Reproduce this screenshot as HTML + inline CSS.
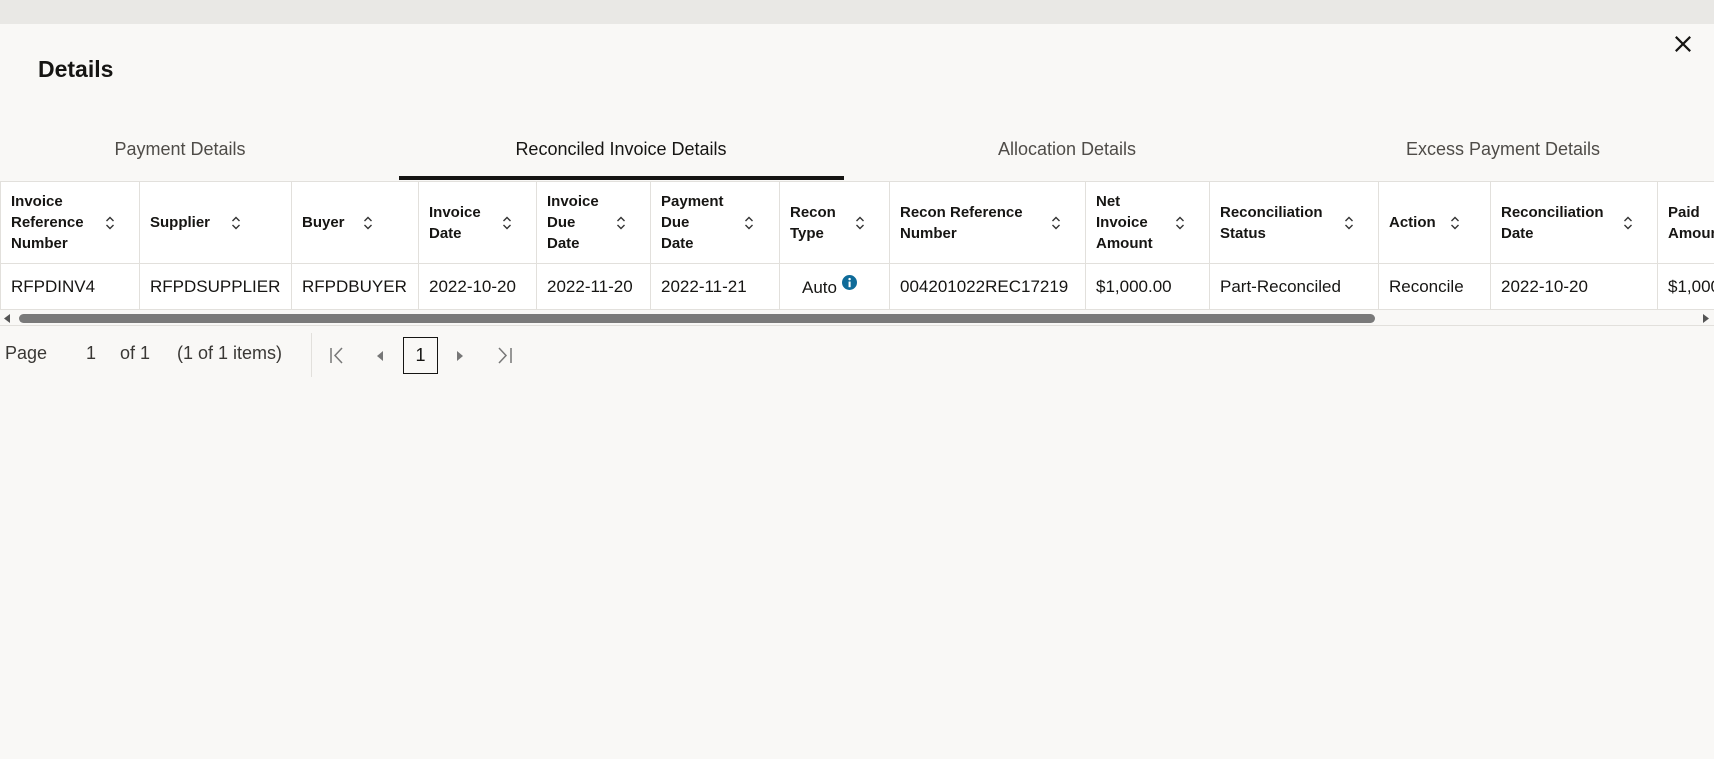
<!DOCTYPE html>
<html><head><meta charset="utf-8"><style>
*{box-sizing:border-box;margin:0;padding:0}
body{width:1714px;height:759px;overflow:hidden;background:#f9f8f6;font-family:"Liberation Sans",sans-serif;color:#161513;position:relative}
.strip{position:absolute;left:0;top:0;width:1714px;height:24px;background:#e9e8e5}
.title{position:absolute;left:38px;top:56px;font-size:23px;font-weight:bold}
.close{position:absolute;left:1674px;top:35px;width:18px;height:18px}
.tab{position:absolute;top:139px;width:400px;margin-left:-200px;text-align:center;font-size:18px;color:#4f4c48}
.tab.active{color:#161513}
.ul{position:absolute;left:399px;top:176px;width:445px;height:4px;background:#161513}
table{position:absolute;left:0;top:181px;border-collapse:collapse;background:#fff;table-layout:fixed;width:1777px}
td,th{border:1px solid #e2e0dc;padding:0 10px;vertical-align:middle;text-align:left;white-space:nowrap;overflow:hidden}
th{height:82px;font-size:15px;font-weight:bold;line-height:21px;position:relative}
th svg{position:absolute;right:22px;top:50%;margin-top:-8px}
td{height:46px;font-size:17px}
.sb{position:absolute;left:0;top:310px;width:1714px;height:16px;background:#f9f8f6;border-bottom:1px solid #e2e0dc}
.thumb{position:absolute;left:19px;top:4px;width:1356px;height:9px;border-radius:5px;background:#7a7a7a}
.pg{position:absolute;top:343px;font-size:18px;color:#3a3835}
.box{position:absolute;left:403px;top:337px;width:35px;height:37px;border:1px solid #161513;font-size:18px;text-align:center;line-height:35px}
.sep{position:absolute;left:311px;top:333px;width:1px;height:44px;background:#e2e0dc}
</style></head><body>
<div class="strip"></div>
<div class="title">Details</div>
<svg class="close" viewBox="0 0 20 20"><path d="M2 2L18 18M18 2L2 18" stroke="#161513" stroke-width="2.4"/></svg>
<div class="tab" style="left:180px">Payment Details</div>
<div class="tab active" style="left:621px">Reconciled Invoice Details</div>
<div class="tab" style="left:1067px">Allocation Details</div>
<div class="tab" style="left:1503px">Excess Payment Details</div>
<div class="ul"></div>
<svg width="0" height="0" style="position:absolute"><defs><symbol id="s" viewBox="0 0 10 16"><path d="M1.5 6L5 2.5L8.5 6M1.5 10L5 13.5L8.5 10" stroke="#333" stroke-width="1.4" fill="none"/></symbol></defs></svg>
<table>
<colgroup><col style="width:139px"><col style="width:152px"><col style="width:127px"><col style="width:118px"><col style="width:114px"><col style="width:129px"><col style="width:110px"><col style="width:196px"><col style="width:124px"><col style="width:169px"><col style="width:112px"><col style="width:167px"><col style="width:120px"></colgroup>
<tr>
<th>Invoice<br>Reference<br>Number<svg width="10" height="16" style="right:24px"><use href="#s"/></svg></th>
<th>Supplier<svg width="10" height="16" style="right:50px"><use href="#s"/></svg></th>
<th>Buyer<svg width="10" height="16" style="right:45px"><use href="#s"/></svg></th>
<th>Invoice<br>Date<svg width="10" height="16" style="right:24px"><use href="#s"/></svg></th>
<th>Invoice<br>Due<br>Date<svg width="10" height="16" style="right:24px"><use href="#s"/></svg></th>
<th>Payment<br>Due<br>Date<svg width="10" height="16" style="right:25px"><use href="#s"/></svg></th>
<th>Recon<br>Type<svg width="10" height="16" style="right:24px"><use href="#s"/></svg></th>
<th>Recon Reference<br>Number<svg width="10" height="16" style="right:24px"><use href="#s"/></svg></th>
<th>Net<br>Invoice<br>Amount<svg width="10" height="16" style="right:24px"><use href="#s"/></svg></th>
<th>Reconciliation<br>Status<svg width="10" height="16" style="right:24px"><use href="#s"/></svg></th>
<th>Action<svg width="10" height="16" style="right:30px"><use href="#s"/></svg></th>
<th>Reconciliation<br>Date<svg width="10" height="16" style="right:24px"><use href="#s"/></svg></th>
<th>Paid<br>Amount</th>
</tr>
<tr>
<td>RFPDINV4</td><td>RFPDSUPPLIER</td><td>RFPDBUYER</td><td>2022-10-20</td><td>2022-11-20</td><td>2022-11-21</td>
<td style="padding-left:22px">Auto <svg width="15" height="15" viewBox="0 0 16 16" style="vertical-align:3px"><circle cx="8" cy="8" r="8" fill="#0f6b99"/><rect x="7" y="7" width="2.2" height="6" fill="#fff"/><circle cx="8.1" cy="4.4" r="1.3" fill="#fff"/></svg></td>
<td>004201022REC17219</td><td>$1,000.00</td><td>Part-Reconciled</td><td>Reconcile</td><td>2022-10-20</td><td>$1,000.00</td>
</tr>
</table>
<div class="sb"><svg style="position:absolute;left:4px;top:4px" width="6" height="9"><path d="M6 0L0 4.5L6 9Z" fill="#555"/></svg><div class="thumb"></div><svg style="position:absolute;left:1703px;top:4px" width="6" height="9"><path d="M0 0L6 4.5L0 9Z" fill="#555"/></svg></div>
<div class="pg" style="left:5px">Page</div>
<div class="pg" style="left:86px">1</div>
<div class="pg" style="left:120px">of 1</div>
<div class="pg" style="left:177px">(1 of 1 items)</div>
<div class="sep"></div>
<svg style="position:absolute;left:330px;top:347px" width="18" height="17"><path d="M1 1V16M12 1L5 8.5L12 16" stroke="#777" stroke-width="1.5" fill="none"/></svg>
<svg style="position:absolute;left:376px;top:351px" width="8" height="10"><path d="M7 0L1 5L7 10Z" fill="#777"/></svg>
<div class="box">1</div>
<svg style="position:absolute;left:456px;top:351px" width="8" height="10"><path d="M1 0L7 5L1 10Z" fill="#777"/></svg>
<svg style="position:absolute;left:494px;top:347px" width="18" height="17"><path d="M17 1V16M5 1L12 8.5L5 16" stroke="#777" stroke-width="1.5" fill="none"/></svg>
</body></html>
